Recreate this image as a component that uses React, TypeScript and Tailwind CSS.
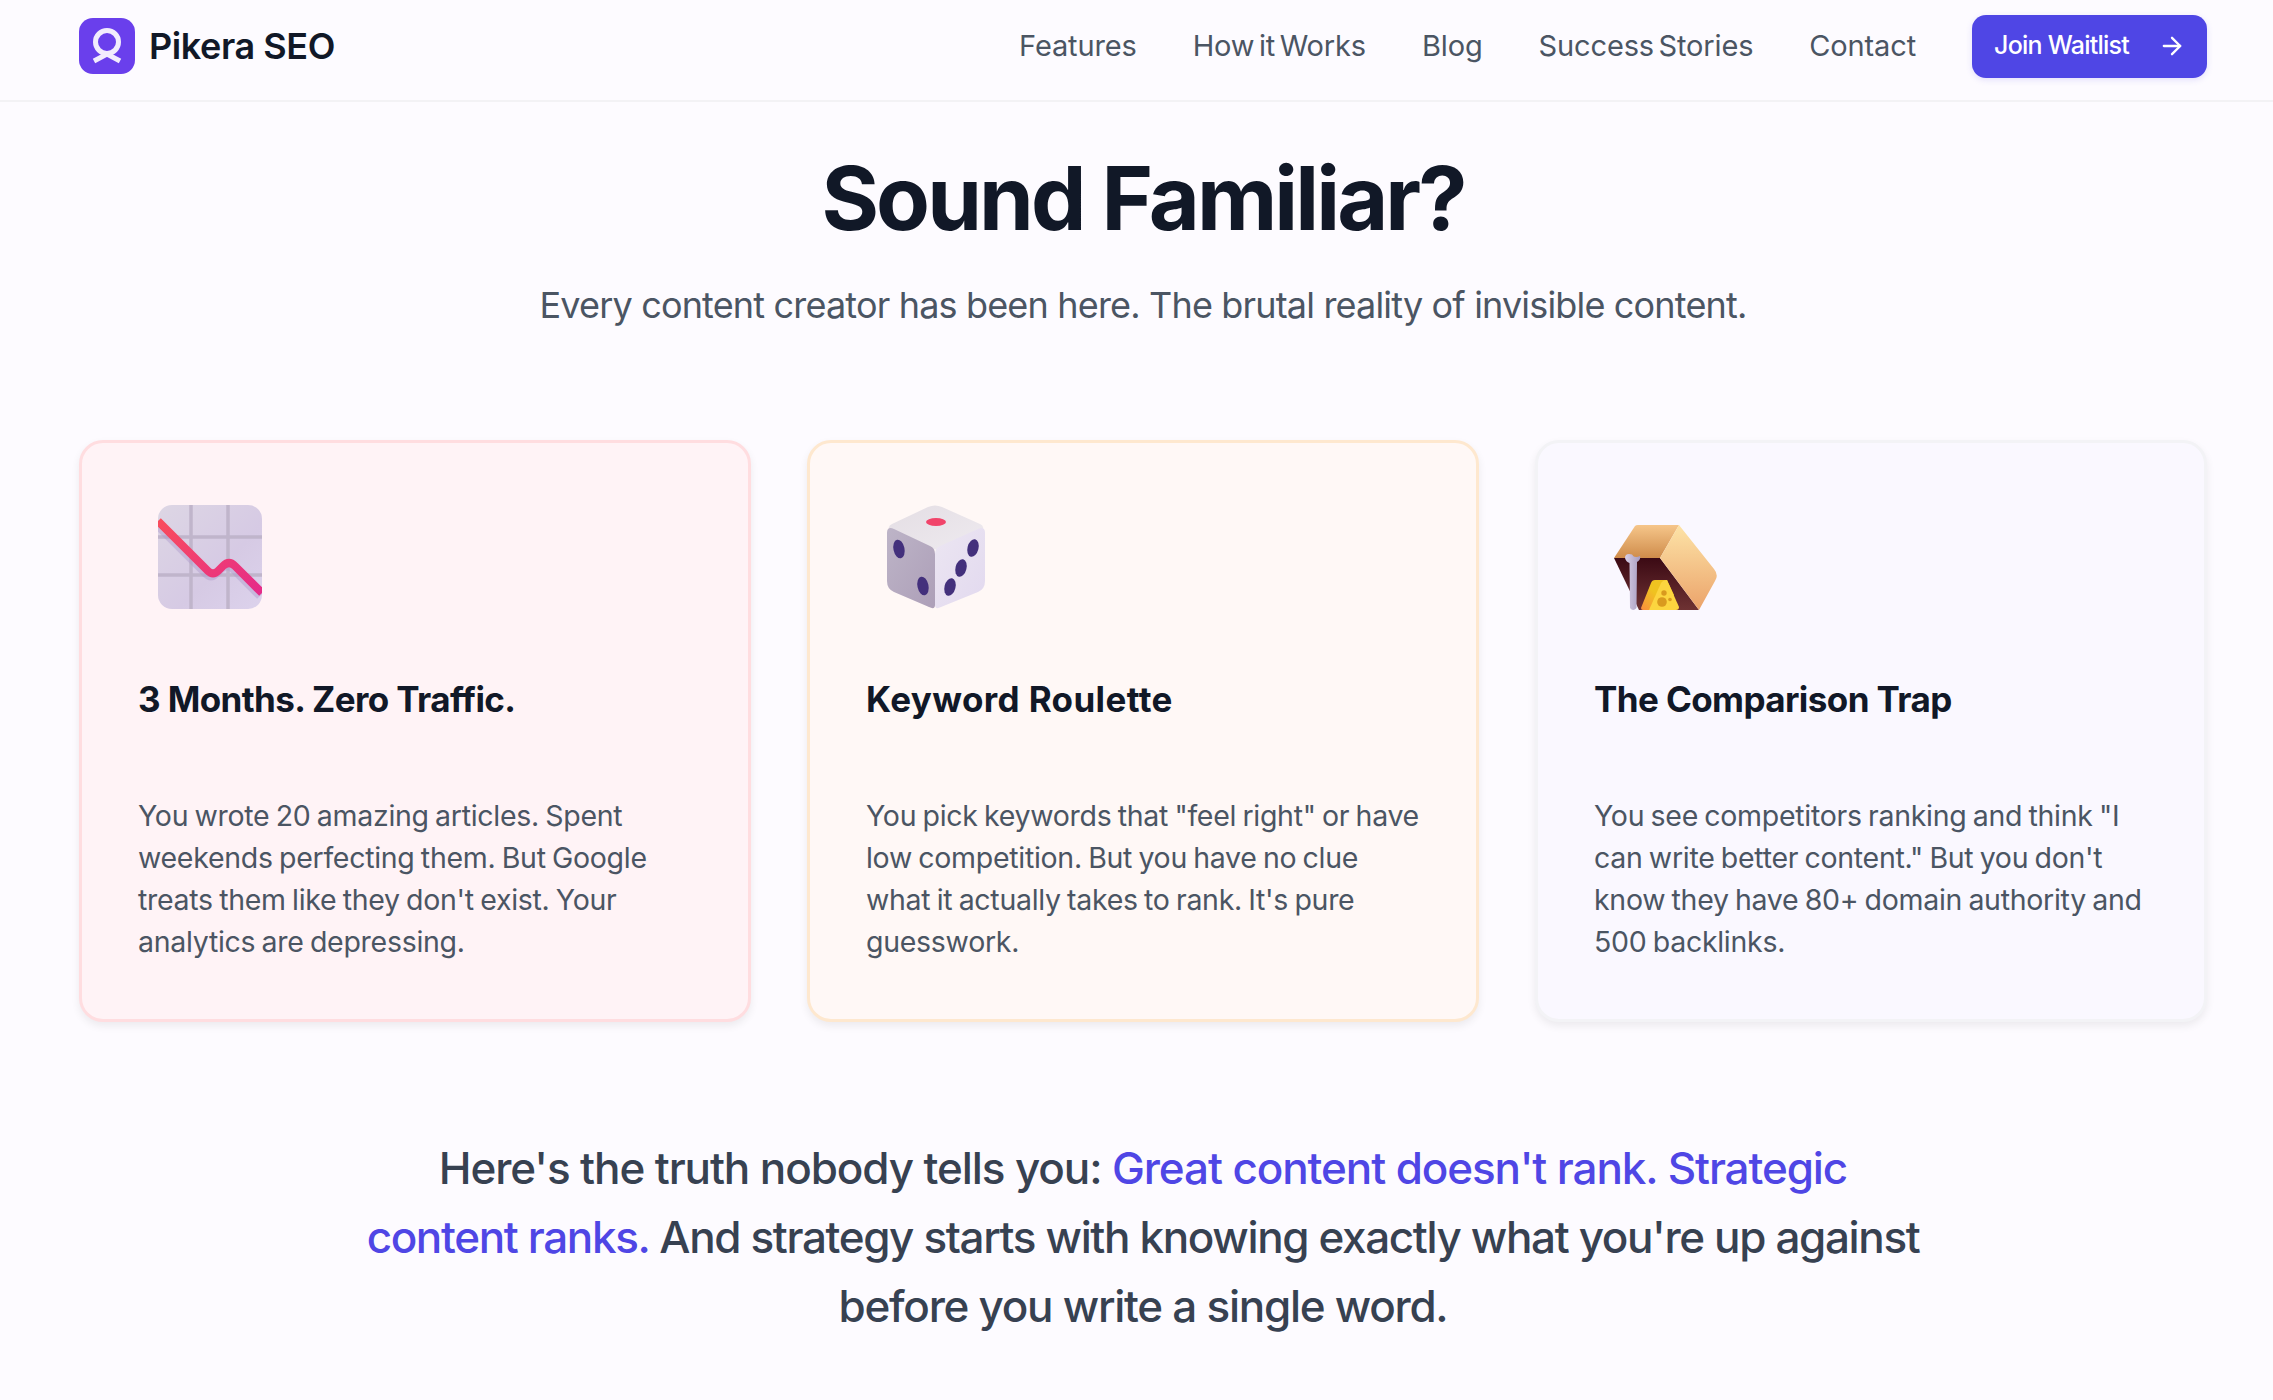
import React from "react";
import { ArrowRight } from "lucide-react";

const font = "font-['Inter','Noto_Sans',sans-serif]";

function ChartIcon() {
  const line = "M0 16L50 66Q55 71 60 66L65 61Q71 55 77 61L104 88";
  return (
    <svg width="104" height="104" viewBox="0 0 104 104" className="shrink-0">
      <defs>
        <linearGradient id="cbg" x1="0" y1="0" x2="1" y2="1">
          <stop offset="0" stopColor="#ddd6e4" />
          <stop offset="0.6" stopColor="#d6cae4" />
          <stop offset="1" stopColor="#dcd2ec" />
        </linearGradient>
        <linearGradient id="cline" x1="0" y1="0" x2="1" y2="1">
          <stop offset="0" stopColor="#f94d5c" />
          <stop offset="1" stopColor="#e52b8a" />
        </linearGradient>
        <clipPath id="cclip">
          <rect width="104" height="104" rx="14" />
        </clipPath>
      </defs>
      <g clipPath="url(#cclip)">
        <rect width="104" height="104" fill="url(#cbg)" />
        <path d="M33 0V104M70 0V104M0 32H104M0 70H104" stroke="#c0b5cb" strokeWidth="3.5" />
        <path d={line} fill="none" stroke="#b09bcb" strokeWidth="8" opacity="0.45" transform="translate(-2 3)" />
        <path d={line} fill="none" stroke="url(#cline)" strokeWidth="8" />
      </g>
    </svg>
  );
}

function DiceIcon() {
  return (
    <svg width="100" height="104" viewBox="0 0 100 104" className="shrink-0">
      <defs>
        <linearGradient id="dtop" x1="0" y1="0" x2="1" y2="1">
          <stop offset="0" stopColor="#e4dee4" />
          <stop offset="1" stopColor="#eeeaef" />
        </linearGradient>
        <linearGradient id="dleft" x1="0" y1="0" x2="1" y2="1">
          <stop offset="0" stopColor="#bdb4c7" />
          <stop offset="1" stopColor="#ad9fb8" />
        </linearGradient>
        <linearGradient id="dright" x1="0" y1="0" x2="1" y2="1">
          <stop offset="0" stopColor="#ece6f2" />
          <stop offset="1" stopColor="#e2d9ef" />
        </linearGradient>
      </defs>
      <path d="M42 2Q49 -1 56 2L94 19Q100 22 94 26L56 43Q49 46 42 43L6 26Q0 22 6 19Z" fill="url(#dtop)" />
      <path d="M1 28Q1 21 8 24L44 41Q49 43 49 49V100Q49 105 43 102L8 87Q1 84 1 76Z" fill="url(#dleft)" />
      <path d="M99 28Q99 21 92 24L54 41Q49 43 49 49V100Q49 105 55 102L92 87Q99 84 99 76Z" fill="url(#dright)" />
      <ellipse cx="50" cy="17" rx="10" ry="4" fill="#f1446a" />
      <g fill="#43307c">
        <ellipse cx="13" cy="44" rx="5.5" ry="9.5" transform="rotate(-12 13 44)" />
        <ellipse cx="37" cy="81" rx="5.5" ry="9.5" transform="rotate(-12 37 81)" />
        <ellipse cx="87" cy="43" rx="5.5" ry="9" transform="rotate(14 87 43)" />
        <ellipse cx="75" cy="63" rx="5.5" ry="9" transform="rotate(14 75 63)" />
        <ellipse cx="64" cy="82" rx="5.5" ry="9" transform="rotate(14 64 82)" />
      </g>
    </svg>
  );
}

function TrapIcon() {
  return (
    <svg width="104" height="86" viewBox="0 0 104 86" className="shrink-0 translate-y-[2px]">
      <defs>
        <linearGradient id="ttop" x1="0" y1="0" x2="0" y2="1">
          <stop offset="0" stopColor="#f6c68a" />
          <stop offset="1" stopColor="#cf8c4b" />
        </linearGradient>
        <linearGradient id="tside" x1="0" y1="0" x2="0" y2="1">
          <stop offset="0" stopColor="#fde3a7" />
          <stop offset="1" stopColor="#eba36a" />
        </linearGradient>
        <linearGradient id="tdark" x1="0" y1="0" x2="0" y2="1">
          <stop offset="0" stopColor="#3b0a14" />
          <stop offset="1" stopColor="#6e3233" />
        </linearGradient>
        <linearGradient id="tbone" x1="0" y1="0" x2="1" y2="0">
          <stop offset="0" stopColor="#d8cfe6" />
          <stop offset="1" stopColor="#a89cc0" />
        </linearGradient>
        <linearGradient id="tcheese" x1="0" y1="1" x2="1" y2="0">
          <stop offset="0" stopColor="#fb8d3e" />
          <stop offset="0.5" stopColor="#efc320" />
        </linearGradient>
      </defs>
      <path d="M0 33H46L85 85H25Z" fill="url(#tdark)" />
      <path d="M21 1Q22 0 24 0H65L46 33H0Z" fill="url(#ttop)" />
      <path d="M65 0L100 44Q105 50 101 56L85 85L46 33Z" fill="url(#tside)" />
      <path d="M11 33Q11 29 15 29Q19 29 19 31Q22 33 26 31Q27 35 23 37L22.5 83Q19 87 16 83L15.5 38Q12 37 11 33Z" fill="url(#tbone)" />
      <path d="M27 83L37 58Q38 55 41 55H53L60 70L46 85H29Q27 85 27 83Z" fill="url(#tcheese)" />
      <path d="M35 85L47 58Q49 55 53 55L65 82Q65 85 62 85Z" fill="#fcd53f" />
      <circle cx="50" cy="68" r="2.7" fill="#d99a1e" />
      <circle cx="48" cy="77" r="4.8" fill="#d99a1e" />
      <circle cx="56" cy="74.5" r="1.8" fill="#d99a1e" />
    </svg>
  );
}

function Card({ tone, icon, title, titleClass, lines }: { tone: string; icon: React.ReactNode; title: string; titleClass: string; lines: string[] }) {
  return (
    <div className={`h-[582px] rounded-[24px] border-[3px] px-[56px] pt-[62px] shadow-[0_4px_8px_rgba(0,0,0,0.07)] ${tone}`}>
      <div className="flex h-[104px] items-end pl-[20px]">{icon}</div>
      <h3 className={`mt-[65px] text-[35px] leading-[50px] font-bold text-[#111827] ${titleClass}`}>{title}</h3>
      <p className="mt-[71px] text-[28.5px] leading-[42px] tracking-[-0.01em] [word-spacing:-0.05em] text-[#4b5563]">
        {lines.map((l) => (
          <span key={l} className="block whitespace-nowrap">{l}</span>
        ))}
      </p>
    </div>
  );
}

export default function App() {
  return (
    <div className={`min-h-[1400px] bg-[#fdfbff] ${font}`}>
      <nav className="flex h-[102px] items-center justify-between border-b-2 border-[#f3f2f5] pb-[8px] pl-[79px] pr-[66px]">
        <div className="flex items-center gap-[14px]">
          <svg width="56" height="56" viewBox="0 0 56 56">
            <rect width="56" height="56" rx="14" fill="#6a3fec" />
            <circle cx="28" cy="24" r="11.5" fill="none" stroke="#f2ecfd" strokeWidth="5" />
            <path d="M15 43L28 36L41 43" fill="none" stroke="#f2ecfd" strokeWidth="5" />
          </svg>
          <span className="text-[36px] font-semibold tracking-[-0.012em] text-[#111827]">Pikera SEO</span>
        </div>
        <div className="flex items-center">
          <div className="flex items-center gap-[56px] text-[29px] tracking-[-0.005em] [word-spacing:-0.12em] text-[#4b5563]">
            <span>Features</span>
            <span>How it Works</span>
            <span>Blog</span>
            <span>Success Stories</span>
            <span>Contact</span>
          </div>
          <button className="ml-[56px] flex h-[63px] w-[235px] items-center justify-between rounded-[14px] bg-[#4f46e5] pl-[22px] pr-[21px] text-[25px] font-medium tracking-[-0.03em] text-white shadow-[0_2px_6px_rgba(79,70,229,0.15)]">
            <span>Join Waitlist</span>
            <ArrowRight size={28} strokeWidth={2} />
          </button>
        </div>
      </nav>

      <main className="pl-[79px] pr-[66px]">
        <h1 className="mt-[44px] text-center text-[88px] leading-[104px] font-bold tracking-[-0.033em] text-[#111827]">Sound Familiar?</h1>
        <p className="mt-[28px] text-center text-[36px] leading-[54px] tracking-[-0.023em] text-[#4b5563]">
          Every content creator has been here. The brutal reality of invisible content.
        </p>

        <div className="mt-[108px] grid grid-cols-3 gap-[56px]">
          <Card
            tone="bg-[#fff3f6] border-[#ffdde0]"
            icon={<ChartIcon />}
            title="3 Months. Zero Traffic."
            titleClass="tracking-[-0.017em]"
            lines={["You wrote 20 amazing articles. Spent", "weekends perfecting them. But Google", "treats them like they don't exist. Your", "analytics are depressing."]}
          />
          <Card
            tone="bg-[#fff8f6] border-[#fee8cf]"
            icon={<DiceIcon />}
            title="Keyword Roulette"
            titleClass="tracking-[0.011em]"
            lines={['You pick keywords that "feel right" or have', "low competition. But you have no clue", "what it actually takes to rank. It's pure", "guesswork."]}
          />
          <Card
            tone="bg-[#faf8ff] border-[#f3f3f6]"
            icon={<TrapIcon />}
            title="The Comparison Trap"
            titleClass="tracking-[-0.017em]"
            lines={['You see competitors ranking and think "I', "can write better content.\" But you don't", "know they have 80+ domain authority and", "500 backlinks."]}
          />
        </div>

        <p className="mt-[112px] text-center text-[44px] leading-[69px] font-medium text-[#374151]">
          <span className="block whitespace-nowrap tracking-[-0.025em]">Here's the truth nobody tells you: <span className="text-[#4f46e5]">Great content doesn't rank. Strategic</span></span>
          <span className="block whitespace-nowrap tracking-[-0.031em]"><span className="text-[#4f46e5]">content ranks.</span> And strategy starts with knowing exactly what you're up against</span>
          <span className="block whitespace-nowrap tracking-[-0.029em]">before you write a single word.</span>
        </p>
      </main>
    </div>
  );
}
